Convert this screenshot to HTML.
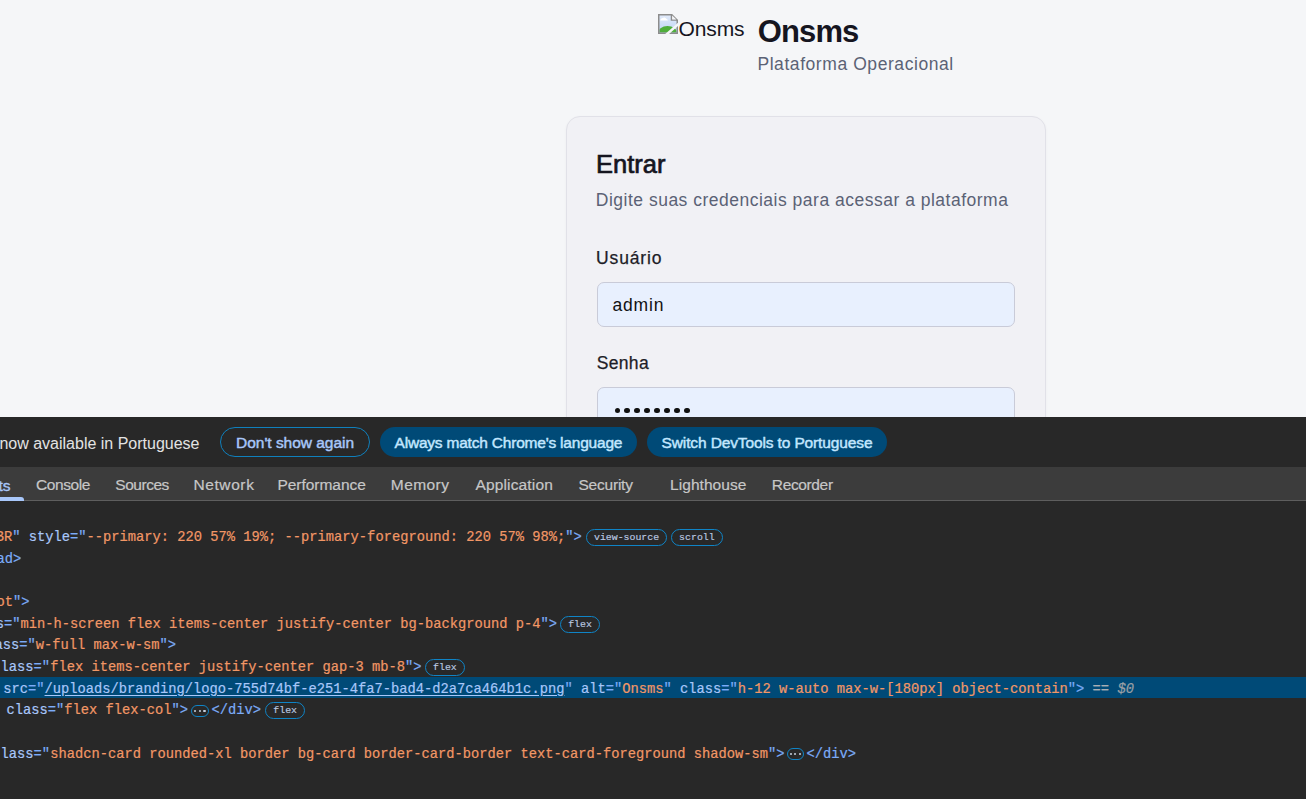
<!DOCTYPE html>
<html><head><meta charset="utf-8">
<style>
*{margin:0;padding:0;box-sizing:border-box}
html,body{width:1306px;height:799px;overflow:hidden;background:#f5f6f8;font-family:"Liberation Sans",sans-serif}
.a{position:absolute;white-space:pre;line-height:1}
#page{position:absolute;left:0;top:0;width:1306px;height:417px;overflow:hidden;background:#f5f6f8}
.card{position:absolute;left:566px;top:116px;width:480px;height:500px;border:1px solid #e1e1e8;border-radius:14px;background:#f1f1f5;box-shadow:0 1px 3px rgba(0,0,0,.04)}
.inp{position:absolute;left:597px;width:418px;height:45px;border:1px solid #c9cbd8;border-radius:7px;background:#e8f0fe}
#dt{position:absolute;left:0;top:417px;width:1306px;height:382px;background:#282828;overflow:hidden}
.tabbar{position:absolute;left:0;top:50px;width:1306px;height:34px;background:#3c3c3c;border-bottom:1px solid #5e5e5e}
.btn{position:absolute;top:10px;height:30px;border-radius:15px}
.code{position:absolute;font-family:"Liberation Mono",monospace;font-size:13.75px;white-space:pre;line-height:1;-webkit-text-stroke-width:0.2px}
.t{color:#7cacf8}.n{color:#a8c7fa}.v{color:#f29766}
.u{text-decoration:underline;text-underline-offset:1.5px;color:#a8c7fa}
.eq{color:#a9aeb4}.dol{color:#9aa0a6;font-style:italic}
.badge{position:absolute;height:16px;border:1.3px solid #0f84c6;border-radius:9px;font-family:"Liberation Mono",monospace;font-size:9.9px;color:#bccae2;text-align:center;-webkit-text-stroke-width:0.15px}
.dots{position:absolute;height:12px;border:1.3px solid #0f84c6;border-radius:6px;display:flex;justify-content:center;align-items:center;gap:2.4px}
.dots i{display:block;width:2.2px;height:2.2px;border-radius:50%;background:#c7d0de}

</style></head><body>
<div id="page">
  <svg style="position:absolute;left:658px;top:14px" width="20" height="20" viewBox="0 0 20 20">
    <defs><linearGradient id="sky" x1="0" y1="0" x2="0" y2="1"><stop offset="0" stop-color="#e2ebfa"/><stop offset="1" stop-color="#bcd2f4"/></linearGradient>
    <clipPath id="pg"><path d="M1.5 1.5 H13.5 L18.5 6.5 V18.5 H1.5 Z"/></clipPath></defs>
    <path d="M0.75 0.75 H14 L19.25 6 V19.25 H0.75 Z" fill="url(#sky)"/>
    <g clip-path="url(#pg)">
      <path d="M2.5 5.5 C3.2 4.2 4.5 3.9 5.5 3.7 C6.5 3.4 8 4 8.5 5 C9.3 5.2 9.8 5.6 9.8 6.4 H2.2 Z" fill="#fff"/>
      <ellipse cx="9.5" cy="19.5" rx="9.8" ry="7.6" fill="#4fae3b"/>
    </g>
    <path d="M0.75 0.75 H13.8 L19.25 6.2 V19.25 H0.75 Z" fill="none" stroke="#8c8c8c" stroke-width="1.5"/>
    <path d="M13.5 0.75 V5.9 H19.25" fill="none" stroke="#8c8c8c" stroke-width="1.5"/>
    <path d="M14.2 1.6 L18.4 5.4 H14.2 Z" fill="#f4f4f6"/>
    <line x1="8" y1="21" x2="21" y2="9.5" stroke="#f5f5f7" stroke-width="2.6"/>
  </svg>
  <div class="card"></div>
  <div class="inp" style="top:282px"></div>
  <div class="inp" style="top:387px"></div>
<span id="tp1" class="a" style="left:678.6px;top:17.52px;font-size:21px;font-weight:400;color:#15151f;letter-spacing:-0.14px;">Onsms</span>
<span id="tp2" class="a" style="left:757.8px;top:16.28px;font-size:31px;font-weight:700;color:#15151f;letter-spacing:-0.9px;">Onsms</span>
<span id="tp3" class="a" style="left:757.4px;top:56.1px;font-size:17.5px;font-weight:400;color:#5b6275;letter-spacing:0.571px;">Plataforma Operacional</span>
<span id="tp4" class="a" style="left:595.96px;top:152.02px;font-size:25.5px;font-weight:400;color:#15151f;letter-spacing:0.016px;-webkit-text-stroke:0.7px #15151f">Entrar</span>
<span id="tp5" class="a" style="left:595.8px;top:191.64px;font-size:17.5px;font-weight:400;color:#5b6275;letter-spacing:0.5px;">Digite suas credenciais para acessar a plataforma</span>
<span id="tp6" class="a" style="left:596.12px;top:250.16px;font-size:17.5px;font-weight:400;color:#1d1d27;letter-spacing:0.838px;-webkit-text-stroke:0.25px #1d1d27">Usuário</span>
<span id="tp7" class="a" style="left:612.44px;top:297.04px;font-size:17.5px;font-weight:400;color:#111;letter-spacing:0.82px;">admin</span>
<span id="tp8" class="a" style="left:596.68px;top:354.6px;font-size:17.5px;font-weight:400;color:#1d1d27;letter-spacing:0.34px;-webkit-text-stroke:0.25px #1d1d27">Senha</span>
<div style="position:absolute;left:614.50px;top:407.75px;width:5.5px;height:5.5px;border-radius:50%;background:#111"></div><div style="position:absolute;left:624.43px;top:407.75px;width:5.5px;height:5.5px;border-radius:50%;background:#111"></div><div style="position:absolute;left:634.36px;top:407.75px;width:5.5px;height:5.5px;border-radius:50%;background:#111"></div><div style="position:absolute;left:644.29px;top:407.75px;width:5.5px;height:5.5px;border-radius:50%;background:#111"></div><div style="position:absolute;left:654.22px;top:407.75px;width:5.5px;height:5.5px;border-radius:50%;background:#111"></div><div style="position:absolute;left:664.15px;top:407.75px;width:5.5px;height:5.5px;border-radius:50%;background:#111"></div><div style="position:absolute;left:674.08px;top:407.75px;width:5.5px;height:5.5px;border-radius:50%;background:#111"></div><div style="position:absolute;left:684.01px;top:407.75px;width:5.5px;height:5.5px;border-radius:50%;background:#111"></div>
</div>
<div id="dt">
  <div class="btn" style="left:220px;width:150px;border:1.3px solid #0f80bd"></div>
  <div class="btn" style="left:380px;width:257px;background:#004a77"></div>
  <div class="btn" style="left:647px;width:240px;background:#004a77"></div>
  <div class="tabbar">
    <div style="position:absolute;left:0;top:30px;width:24px;height:4px;background:#a8c7fa;border-radius:0 3px 0 0"></div>
  </div>
  <div style="position:absolute;left:0;top:260px;width:1306px;height:21px;background:#004a77"></div>
<div class="code" style="left:-4.25px;top:113.80px"><span class="v">BR</span><span class="t">&quot;</span> <span class="n">style</span><span class="t">=&quot;</span><span class="v">--primary: 220 57% 19%; --primary-foreground: 220 57% 98%;</span><span class="t">&quot;&gt;</span></div>
<div class="code" style="left:-3.5px;top:135.50px"><span class="t">ad&gt;</span></div>
<div class="code" style="left:-3.45px;top:178.90px"><span class="v">ot</span><span class="t">&quot;&gt;</span></div>
<div class="code" style="left:-4.2px;top:200.60px"><span class="n">s</span><span class="t">=&quot;</span><span class="v">min-h-screen flex items-center justify-center bg-background p-4</span><span class="t">&quot;&gt;</span></div>
<div class="code" style="left:-5.5px;top:222.30px"><span class="n">ass</span><span class="t">=&quot;</span><span class="v">w-full max-w-sm</span><span class="t">&quot;&gt;</span></div>
<div class="code" style="left:0.6px;top:244.00px"><span class="n">lass</span><span class="t">=&quot;</span><span class="v">flex items-center justify-center gap-3 mb-8</span><span class="t">&quot;&gt;</span></div>
<div class="code" style="left:-5.0px;top:265.70px"> <span class="n">src</span><span class="t">=&quot;</span><span class="u">/uploads/branding/logo-755d74bf-e251-4fa7-bad4-d2a7ca464b1c.png</span><span class="t">&quot;</span> <span class="n">alt</span><span class="t">=&quot;</span><span class="v">Onsms</span><span class="t">&quot;</span> <span class="n">class</span><span class="t">=&quot;</span><span class="v">h-12 w-auto max-w-[180px] object-contain</span><span class="t">&quot;&gt;</span><span class="eq"> == </span><span class="dol">$0</span></div>
<div class="code" style="left:-1.9px;top:287.40px"> <span class="n">class</span><span class="t">=&quot;</span><span class="v">flex flex-col</span><span class="t">&quot;&gt;</span></div>
<div class="code" style="left:0.6px;top:330.80px"><span class="n">lass</span><span class="t">=&quot;</span><span class="v">shadcn-card rounded-xl border bg-card border-card-border text-card-foreground shadow-sm</span><span class="t">&quot;&gt;</span></div>
<div class="code" style="left:211.5px;top:287.40px"><span class="t">&lt;/div&gt;</span></div>
<div class="code" style="left:806.5px;top:330.80px"><span class="t">&lt;/div&gt;</span></div>
<div class="badge" style="left:586.3px;width:80.5px;top:111.8px;height:17px;line-height:15.4px">view-source</div>
<div class="badge" style="left:671px;width:51.8px;top:111.8px;height:17px;line-height:15.4px">scroll</div>
<div class="badge" style="left:560.1px;width:39.8px;top:198.6px;height:17px;line-height:15.4px">flex</div>
<div class="badge" style="left:425px;width:39.9px;top:242.0px;height:17px;line-height:15.4px">flex</div>
<div class="badge" style="left:265.1px;width:40.1px;top:285.4px;height:17px;line-height:15.4px">flex</div>
<div class="dots" style="left:190.9px;width:18.1px;top:287.6px"><i></i><i></i><i></i></div>
<div class="dots" style="left:787px;width:16.7px;top:331.0px"><i></i><i></i><i></i></div>
<span id="td1" class="a" style="left:-0.64px;top:19.44px;font-size:16px;font-weight:400;color:#e3e3e3;letter-spacing:0px;">now available in Portuguese</span>
<span id="td2" class="a" style="left:236.08px;top:17.68px;font-size:15.5px;font-weight:400;color:#a8c7fa;letter-spacing:-0.032px;-webkit-text-stroke:0.45px #a8c7fa">Don't show again</span>
<span id="td3" class="a" style="left:394.52px;top:18.040000000000003px;font-size:15.5px;font-weight:400;color:#c2e7ff;letter-spacing:-0.204px;-webkit-text-stroke:0.45px #c2e7ff">Always match Chrome's language</span>
<span id="td4" class="a" style="left:661.6px;top:18.040000000000003px;font-size:15.5px;font-weight:400;color:#c2e7ff;letter-spacing:-0.129px;-webkit-text-stroke:0.45px #c2e7ff">Switch DevTools to Portuguese</span>
<span id="td10" class="a" style="left:-1.48px;top:61.4px;font-size:15.5px;font-weight:400;color:#a8c7fa;letter-spacing:0px;-webkit-text-stroke:0.35px #a8c7fa">ts</span>
<span id="td11" class="a" style="left:36.08px;top:60.4px;font-size:15.5px;font-weight:400;color:#c7c7c7;letter-spacing:-0.438px;-webkit-text-stroke:0.2px #c7c7c7">Console</span>
<span id="td12" class="a" style="left:115.36px;top:60.4px;font-size:15.5px;font-weight:400;color:#c7c7c7;letter-spacing:-0.477px;-webkit-text-stroke:0.2px #c7c7c7">Sources</span>
<span id="td13" class="a" style="left:193.4px;top:60.4px;font-size:15.5px;font-weight:400;color:#c7c7c7;letter-spacing:0.609px;-webkit-text-stroke:0.2px #c7c7c7">Network</span>
<span id="td14" class="a" style="left:277.4px;top:60.4px;font-size:15.5px;font-weight:400;color:#c7c7c7;letter-spacing:-0.032px;-webkit-text-stroke:0.2px #c7c7c7">Performance</span>
<span id="td15" class="a" style="left:390.84px;top:60.4px;font-size:15.5px;font-weight:400;color:#c7c7c7;letter-spacing:0.416px;-webkit-text-stroke:0.2px #c7c7c7">Memory</span>
<span id="td16" class="a" style="left:475.48px;top:60.4px;font-size:15.5px;font-weight:400;color:#c7c7c7;letter-spacing:0.152px;-webkit-text-stroke:0.2px #c7c7c7">Application</span>
<span id="td17" class="a" style="left:578.44px;top:60.4px;font-size:15.5px;font-weight:400;color:#c7c7c7;letter-spacing:-0.21px;-webkit-text-stroke:0.2px #c7c7c7">Security</span>
<span id="td18" class="a" style="left:670.12px;top:60.4px;font-size:15.5px;font-weight:400;color:#c7c7c7;letter-spacing:0.045px;-webkit-text-stroke:0.2px #c7c7c7">Lighthouse</span>
<span id="td19" class="a" style="left:771.84px;top:60.4px;font-size:15.5px;font-weight:400;color:#c7c7c7;letter-spacing:-0.362px;-webkit-text-stroke:0.2px #c7c7c7">Recorder</span>
</div>
</body></html>
